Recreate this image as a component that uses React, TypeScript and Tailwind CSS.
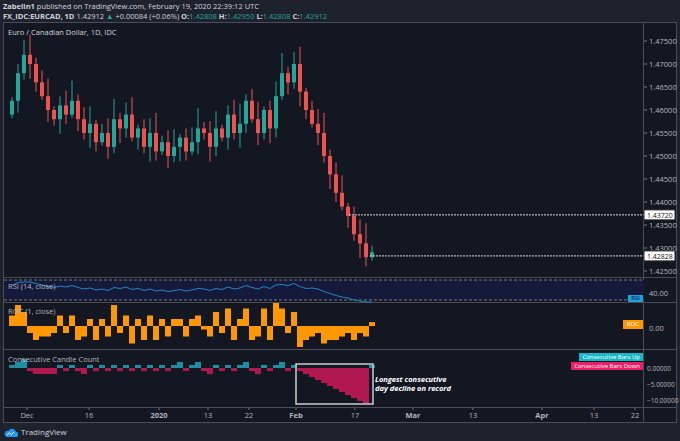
import React from "react";

const closes = [1.462,1.468,1.472,1.470,1.466,1.463,1.460,1.458,1.461,1.459,1.462,1.458,1.455,1.457,1.453,1.455,1.452,1.458,1.456,1.459,1.454,1.456,1.452,1.455,1.451,1.453,1.450,1.452,1.454,1.451,1.453,1.456,1.455,1.452,1.456,1.454,1.459,1.455,1.457,1.462,1.458,1.455,1.460,1.456,1.463,1.468,1.466,1.470,1.464,1.460,1.457,1.455,1.450,1.446,1.442,1.439,1.437,1.433,1.431,1.428,1.4291];
const UP = "#26a69a", DN = "#ef5350";
const py = (p: number) => 18 + (1.475 - p) * 4600;
const X0 = 8, DX = 6;

function Chart() {
  const W = 640;
  const candles = closes.map((c, i) => {
    const o = i === 0 ? 1.459 : closes[i - 1];
    const x = X0 + i * DX;
    const w1 = ((i * 37) % 7) * 0.0006 + 0.0008;
    const w2 = ((i * 53) % 5) * 0.0006 + 0.0008;
    const hi = Math.max(o, c) + w1, lo = Math.min(o, c) - w2;
    const col = c >= o ? UP : DN;
    const top = py(Math.max(o, c)), bot = py(Math.min(o, c));
    return (
      <g key={i}>
        <line x1={x} x2={x} y1={py(hi)} y2={py(lo)} stroke={col} strokeWidth={1} />
        <rect x={x - 2} y={top} width={4} height={Math.max(1, bot - top)} fill={col} />
      </g>
    );
  });
  const priceLabels = [1.475,1.47,1.465,1.46,1.455,1.45,1.445,1.44,1.435,1.43,1.425];
  const rsi = closes.map((c, i) => {
    const x = X0 + i * DX;
    const v = 11 + (c - 1.455) * 500 + (i >= 45 && i < 50 ? -2 : 0);
    return `${x},${Math.min(24, Math.max(4, 14 - v + 8))}`;
  }).join(" ");
  const roc = closes.map((c, i) => {
    const o = i === 0 ? 1.459 : closes[i - 1];
    const h = (c - o) * 3500;
    const x = X0 + i * DX;
    return <rect key={i} x={x - 3} y={h > 0 ? 23 - h : 23} width={6} height={Math.max(1, Math.abs(h))} fill="#ff9800" />;
  });
  let streak = 0;
  const ccc = closes.map((c, i) => {
    const o = i === 0 ? 1.4599 : closes[i - 1];
    if (c >= o) streak = streak > 0 ? streak + 1 : 1; else streak = streak < 0 ? streak - 1 : -1;
    const s = i < 48 ? Math.max(-2, Math.min(3, streak)) : streak;
    const h = s * 3;
    const x = X0 + i * DX;
    return <rect key={i} x={x - 3} y={h > 0 ? 18 - h : 18} width={6} height={Math.abs(h)} fill={h > 0 ? "#1e8fa0" : "#b0184f"} />;
  });
  const dates: [string, number, boolean?][] = [["Dec",23],["16",85],["2020",155,true],["13",204],["22",245],["Feb",292,true],["17",351],["Mar",409,true],["13",469],["Apr",538,true],["13",590],["22",631]];
  const axisText = "fill-[#b2b5be] text-[7.5px]";
  return (
    <div className="mx-[3px] border border-[#4a4d57] bg-[#131722] flex flex-col" style={{ height: 401 }}>
      <div className="flex border-b border-[#4a4d57] h-[255px]">
        <div className="relative w-[640px] border-r border-[#4a4d57]">
          <div className="absolute left-[4px] top-[4px] text-[7.5px] text-[#d1d4dc]">Euro / Canadian Dollar, 1D, IDC</div>
          <svg width={W} height={255} className="block">
            {candles}
            <line x1={345} x2={W} y1={py(1.4372)} y2={py(1.4372)} stroke="#ddd" strokeDasharray="2 1" />
            <line x1={366} x2={W} y1={py(1.42828)} y2={py(1.42828)} stroke="#ddd" strokeDasharray="2 1" />
          </svg>
        </div>
        <div className="relative flex-1">
          <svg width={36} height={255} className="block overflow-visible">
            {priceLabels.map((p) => (
              <g key={p}>
                <line x1={0} x2={3} y1={py(p)} y2={py(p)} stroke="#777" />
                <text x={5} y={py(p) + 3} className={axisText}>{p.toFixed(5)}</text>
              </g>
            ))}
            <rect x={0} y={py(1.4372) - 5} width={31} height={10} fill="#fff" stroke="#222" />
            <text x={3} y={py(1.4372) + 3} className="fill-[#111] text-[7px]">1.43720</text>
            <rect x={0} y={py(1.42828) - 5} width={31} height={10} fill="#fff" stroke="#222" />
            <text x={3} y={py(1.42828) + 3} className="fill-[#111] text-[7px]">1.42828</text>
          </svg>
        </div>
      </div>
      <div className="flex border-b border-[#4a4d57] h-[25px]">
        <div className="relative w-[640px] border-r border-[#4a4d57]">
          <div className="absolute left-[4px] top-[3px] text-[7.5px] text-[#b2b5be]">RSI (14, close)</div>
          <svg width={W} height={25} className="block">
            <rect x={0} y={2} width={W} height={20} fill="#151a3a" />
            <line x1={0} x2={W} y1={2} y2={2} stroke="#787b86" strokeDasharray="3 2" />
            <line x1={0} x2={W} y1={22} y2={22} stroke="#787b86" strokeDasharray="3 2" />
            <polyline points={rsi} fill="none" stroke="#2185c7" strokeWidth={1} />
          </svg>
          <div className="absolute right-0 top-[17px] bg-[#1fa2d6] text-[6px] text-[#003] px-[3px] leading-[7px]">RSI</div>
        </div>
        <div className="flex-1 pl-[5px] pt-[10px] text-[7.5px] text-[#b2b5be]">40.00</div>
      </div>
      <div className="flex border-b border-[#4a4d57] h-[47px]">
        <div className="relative w-[640px] border-r border-[#4a4d57]">
          <svg width={W} height={47} className="block">{roc}</svg>
          <div className="absolute left-[4px] top-[3px] text-[7.5px] text-[#b2b5be]">ROC (1, close)</div>
          <div className="absolute right-0 top-[17px] bg-[#ff9800] text-[6px] text-white px-[4px] leading-[9px]">ROC</div>
        </div>
        <div className="flex-1 pl-[5px] pt-[20px] text-[7.5px] text-[#b2b5be]">0.00</div>
      </div>
      <div className="flex border-b border-[#4a4d57] h-[58px]">
        <div className="relative w-[640px] border-r border-[#4a4d57]">
          <div className="absolute left-[4px] top-[4px] text-[7.5px] text-[#b2b5be]">Consecutive Candle Count</div>
          <svg width={W} height={58} className="block">
            {ccc}
            <rect x={292} y={14} width={77} height={40} fill="none" stroke="#ccc" strokeWidth={1.5} />
          </svg>
          <div className="absolute left-[371px] top-[25px] text-[7.5px] leading-[9px] font-bold italic text-white">Longest consecutive<br />day decline on record</div>
          <div className="absolute right-0 top-[3px] flex flex-col items-end gap-[1px]">
            <div className="bg-[#17b8c8] text-[6px] text-white px-[3px] leading-[8px]">Consecutive Bars Up</div>
            <div className="bg-[#e91e63] text-[6px] text-white px-[3px] leading-[8px]">Consecutive Bars Down</div>
          </div>
        </div>
        <div className="flex-1 pl-[3px] pt-[11px] text-[6.5px] leading-[16px] text-[#b2b5be] whitespace-nowrap">
          <div>0.00000</div><div>−5.00000</div><div>−10.00000</div>
        </div>
      </div>
      <div className="flex flex-1">
        <div className="w-[640px] border-r border-[#4a4d57] relative">
          <svg width={W} height={14} className="block">
            {dates.map(([t, x, b]) => (
              <g key={t + x}>
                <line x1={x} x2={x} y1={0} y2={2} stroke="#777" />
                <text x={x} y={10} textAnchor="middle" className={`${axisText} ${b ? "font-bold" : ""}`}>{t}</text>
              </g>
            ))}
          </svg>
        </div>
      </div>
    </div>
  );
}

export default function App() {
  return (
    <div className="w-[680px] h-[441px] bg-[#1e222d] overflow-hidden" style={{ fontFamily: '"Open Sans", "Liberation Sans", sans-serif' }}>
      <div className="px-[3px] pt-[1px] h-[22px] text-[7.5px] leading-[10px] text-[#d1d4dc]">
        <div><b>Zabelin1</b> published on TradingView.com, February 19, 2020 22:39:12 UTC</div>
        <div><b>FX_IDC:EURCAD, 1D</b> <span>1.42912</span> <span className="text-[#26a69a]">▲</span> +0.00084 (+0.06%) <b>O:</b><span className="text-[#26a69a]">1.42808</span> <b>H:</b><span className="text-[#26a69a]">1.42950</span> <b>L:</b><span className="text-[#26a69a]">1.42808</span> <b>C:</b><span className="text-[#26a69a]">1.42912</span></div>
      </div>
      <Chart />
      <div className="flex items-center gap-[3px] px-[4px] h-[18px] text-[8px] text-[#d1d4dc]">
        <svg width={14} height={9} viewBox="0 0 14 9"><path d="M3 9h9a2.5 2.5 0 0 0 0-5 4 4 0 0 0-7.5-1A3 3 0 0 0 3 9z" fill="#2196f3" /><path d="M3 7l2.5-2 2 1.5L10 4" stroke="#fff" strokeWidth={1} fill="none" /></svg>
        <span>TradingView</span>
      </div>
    </div>
  );
}
